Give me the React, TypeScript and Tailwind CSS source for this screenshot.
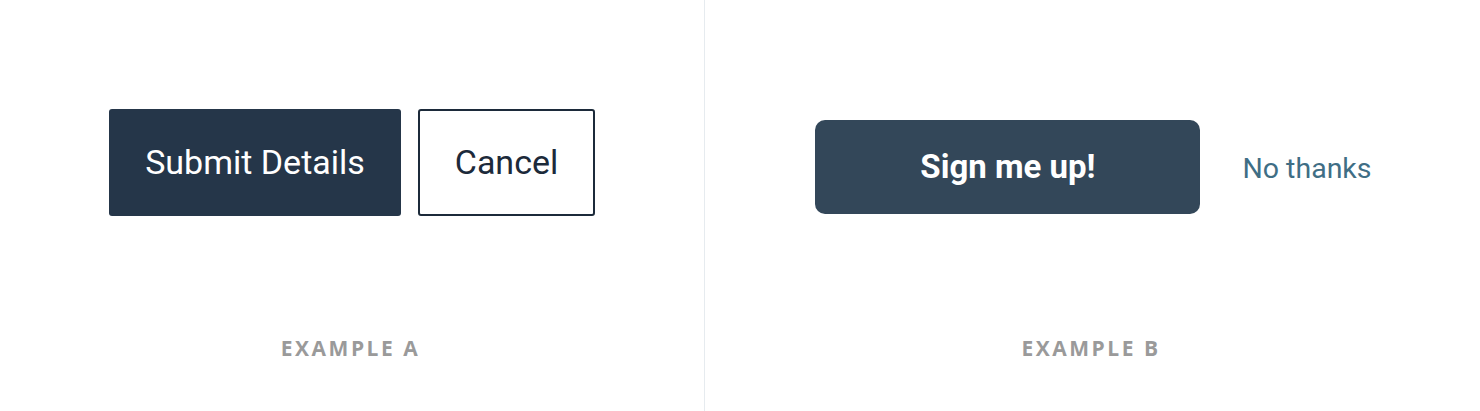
export default function App() {
  return (
    <div className="flex h-[411px] w-[1480px] bg-white font-['Roboto',sans-serif]">
      {/* Example A: filled primary + outlined secondary */}
      <section className="flex w-[705px] flex-col items-center border-r border-[#e6ebef]">
        <div className="mt-[109px] flex h-[107px] items-stretch gap-[17px]">
          <button className="w-[292px] rounded-[3px] bg-[#253649] text-[34px] text-white">
            Submit Details
          </button>
          <button className="w-[177px] rounded-[3px] border-2 border-[#1c2a3a] bg-white text-[34px] text-[#1c2a3a]">
            Cancel
          </button>
        </div>
        <p className="mt-[122px] pr-[3px] font-['Open_Sans',sans-serif] text-[21px] font-bold leading-none tracking-[0.12em] text-[#9a9a9a]">
          EXAMPLE A
        </p>
      </section>

      {/* Example B: filled primary + text link */}
      <section className="flex flex-1 flex-col items-center">
        <div className="mt-[120px] flex h-[94px] items-center gap-[42px] pl-[2px]">
          <button className="h-full w-[385px] rounded-[10px] bg-[#334759] text-[33px] font-bold text-white">
            Sign me up!
          </button>
          <a className="pt-[4px] text-[28.5px] text-[#3f6e85]">No thanks</a>
        </div>
        <p className="mt-[124px] pr-[3px] font-['Open_Sans',sans-serif] text-[21px] font-bold leading-none tracking-[0.12em] text-[#9a9a9a]">
          EXAMPLE B
        </p>
      </section>
    </div>
  );
}
